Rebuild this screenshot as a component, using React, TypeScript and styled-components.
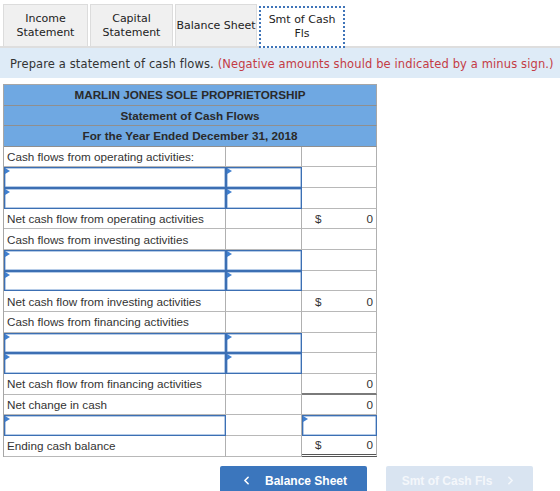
import styled, {createGlobalStyle} from 'styled-components';
import {ChevronLeft, ChevronRight} from 'lucide-react';

const GlobalStyle = createGlobalStyle`
  html, body {
    margin: 0;
    padding: 0;
    background: #ffffff;
  }
  body {
    font-family: 'Liberation Sans', Arial, sans-serif;
  }
`;

type Cell = {text?: string; input?: boolean; dollar?: boolean; value?: string; line?: 'single' | 'double'};
type Row = [Cell, Cell, Cell];

const rows: Row[] = [
  [{text: 'Cash flows from operating activities:'}, {}, {}],
  [{input: true}, {input: true}, {}],
  [{input: true}, {input: true}, {}],
  [{text: 'Net cash flow from operating activities'}, {}, {dollar: true, value: '0'}],
  [{text: 'Cash flows from investing activities'}, {}, {}],
  [{input: true}, {input: true}, {}],
  [{input: true}, {input: true}, {}],
  [{text: 'Net cash flow from investing activities'}, {}, {dollar: true, value: '0'}],
  [{text: 'Cash flows from financing activities'}, {}, {}],
  [{input: true}, {input: true}, {}],
  [{input: true}, {input: true}, {}],
  [{text: 'Net cash flow from financing activities'}, {}, {value: '0', line: 'single'}],
  [{text: 'Net change in cash'}, {}, {value: '0'}],
  [{input: true}, {}, {input: true}],
  [{text: 'Ending cash balance'}, {}, {dollar: true, value: '0', line: 'double'}],
];

const tabs = [
  {label: 'Income\nStatement', width: 85},
  {label: 'Capital\nStatement', width: 83},
  {label: 'Balance Sheet', width: 82},
  {label: 'Smt of Cash\nFls', width: 86, active: true},
];

const App = () => {
  return (
    <>
      <GlobalStyle />
      <Page>
        <TabBar>
          {tabs.map((t) => (
            <Tab key={t.label} $width={t.width} $active={!!t.active}>
              {t.label}
            </Tab>
          ))}
        </TabBar>
        <Instruction>
          Prepare a statement of cash flows.{' '}
          <Warning>(Negative amounts should be indicated by a minus sign.)</Warning>
        </Instruction>
        <Sheet>
          <HeaderRow>MARLIN JONES SOLE PROPRIETORSHIP</HeaderRow>
          <HeaderRow>Statement of Cash Flows</HeaderRow>
          <HeaderRow>For the Year Ended December 31, 2018</HeaderRow>
          {rows.map((row, i) => (
            <GridRow key={i}>
              {row.map((c, j) => (
                <DataCell key={j} $line={c.line}>
                  {c.input ? (
                    <InputBox>
                      <Marker />
                    </InputBox>
                  ) : c.value !== undefined ? (
                    <Amount>
                      <span>{c.dollar ? '$' : ''}</span>
                      <span>{c.value}</span>
                    </Amount>
                  ) : (
                    <Label>{c.text}</Label>
                  )}
                </DataCell>
              ))}
            </GridRow>
          ))}
        </Sheet>
        <NavBar>
          <NavButton>
            <ChevronLeft size={13} strokeWidth={3} />
            Balance Sheet
          </NavButton>
          <NavButton $disabled>
            Smt of Cash Fls
            <ChevronRight size={13} strokeWidth={3} />
          </NavButton>
        </NavBar>
      </Page>
    </>
  );
};

const Page = styled.div`
  width: 560px;
  height: 491px;
  overflow: hidden;
  padding-top: 4px;
  box-sizing: border-box;
`;

const TabBar = styled.div`
  display: flex;
  align-items: flex-end;
  gap: 2px;
  padding-left: 3px;
  border-bottom: 2px solid #dedede;
`;

const Tab = styled.div<{$width: number; $active: boolean}>`
  width: ${({$width}) => $width}px;
  height: 42px;
  box-sizing: border-box;
  display: flex;
  align-items: center;
  justify-content: center;
  text-align: center;
  white-space: pre-line;
  font-family: 'DejaVu Sans', Verdana, sans-serif;
  font-size: 11px;
  line-height: 14px;
  color: #222;
  background: ${({$active}) => ($active ? '#ffffff' : '#f0f0f0')};
  border: ${({$active}) => ($active ? '2px dotted #3f74b8' : '1px solid #dcdcdc')};
  border-bottom: ${({$active}) => ($active ? '2px dotted #3f74b8' : 'none')};
  margin-bottom: ${({$active}) => ($active ? '-2px' : '0')};
`;

const Instruction = styled.div`
  height: 30px;
  display: flex;
  align-items: center;
  padding: 1px 0 0 10px;
  box-sizing: border-box;
  background: #deebf7;
  font-family: 'DejaVu Sans', Verdana, sans-serif;
  font-size: 11.5px;
  letter-spacing: 0.12px;
  color: #333;
  white-space: pre;
`;

const Warning = styled.span`
  color: #c43b45;
`;

const Sheet = styled.div`
  margin: 6px 0 0 3px;
  width: 373px;
  border-left: 1px solid #a6a6a6;
  border-top: 1px solid #a6a6a6;
`;

const HeaderRow = styled.div`
  height: 20.6px;
  box-sizing: border-box;
  display: flex;
  align-items: center;
  justify-content: center;
  background: #6fa8e2;
  border-right: 1px solid #a6a6a6;
  border-bottom: 1px solid #8f8f8f;
  font-weight: bold;
  font-size: 11.7px;
  color: #2a2a2a;
`;

const GridRow = styled.div`
  display: grid;
  grid-template-columns: 222px 76px 75px;
  height: 20.67px;
`;

const DataCell = styled.div<{$line?: 'single' | 'double'}>`
  position: relative;
  box-sizing: border-box;
  display: flex;
  align-items: center;
  border-right: 1px solid #b0b0b0;
  border-bottom: ${({$line}) =>
    $line === 'double' ? '3px double #555' : $line === 'single' ? '2px solid #7a7a7a' : '1px solid #b8b8b8'};
  min-width: 0;
`;

const Label = styled.span`
  padding-left: 3px;
  font-size: 11.7px;
  color: #333;
  white-space: nowrap;
`;

const Amount = styled.div`
  display: flex;
  justify-content: space-between;
  width: 100%;
  padding: 0 3px 0 13px;
  box-sizing: border-box;
  font-size: 11.7px;
  color: #333;
`;

const InputBox = styled.div`
  position: absolute;
  inset: 0 -1px -1px 0;
  border: 1px solid #3c6fb3;
  box-shadow: inset 0 0 0 0.5px #6d97cf;
  background: #ffffff;
`;

const Marker = styled.span`
  position: absolute;
  left: 0;
  top: 0;
  width: 0;
  height: 0;
  border-top: 3px solid transparent;
  border-bottom: 3px solid transparent;
  border-left: 5px solid #3f7fcf;
`;

const NavBar = styled.div`
  display: flex;
  gap: 19px;
  padding-left: 220px;
  margin-top: 9px;
`;

const NavButton = styled.div<{$disabled?: boolean}>`
  width: 147px;
  height: 30px;
  box-sizing: border-box;
  display: flex;
  align-items: center;
  justify-content: center;
  gap: 12px;
  border-radius: 2px;
  font-weight: bold;
  font-size: 12px;
  color: ${({$disabled}) => ($disabled ? '#f4f7fb' : '#ffffff')};
  background: ${({$disabled}) => ($disabled ? '#d9e4f1' : '#3b76bd')};
`;

export default App;
